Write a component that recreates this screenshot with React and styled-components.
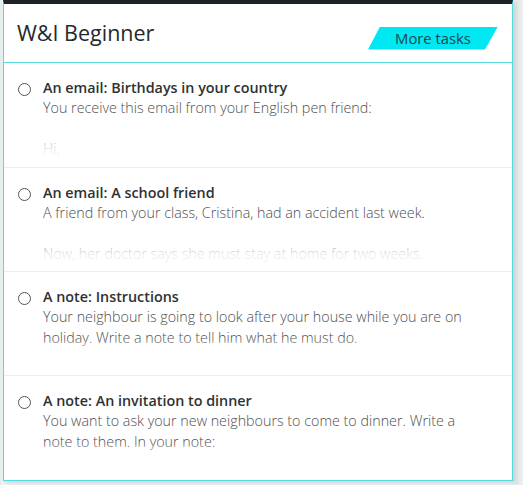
import React from 'react';
import styled, { createGlobalStyle } from 'styled-components';

const GlobalStyle = createGlobalStyle`
  html, body {
    margin: 0;
    padding: 0;
    background: #eef2f2;
    font-family: "Open Sans", "Liberation Sans", sans-serif;
  }
`;

const Page = styled.div`
  width: 523px;
  height: 485px;
  overflow: hidden;
  background: linear-gradient(90deg, #dfeeee 0, #f4f6f6 3px, #f4f6f6 510px, #e4e8e8 516px, #eef0f0 523px);
`;

const Card = styled.section`
  margin-left: 3px;
  width: 508px;
  height: 476px;
  background: #fff;
  border: 1px solid #55dadd;
  border-top: 4px solid #1d2226;
  box-shadow: 2px 2px 5px rgba(120, 140, 140, 0.35);
  display: flex;
  flex-direction: column;
`;

const Header = styled.header`
  height: 58px;
  flex-shrink: 0;
  display: flex;
  align-items: center;
  justify-content: space-between;
  padding: 0 14px 0 13px;
  border-bottom: 1px solid #55dadd;
`;

const Title = styled.h1`
  margin: 0 0 2px;
  font-size: 21.5px;
  font-weight: 400;
  color: #24292c;
`;

const MoreButton = styled.button`
  margin-top: 10px;
  width: 130px;
  height: 23px;
  border: 0;
  background: #00e9f2;
  clip-path: polygon(12px 0, 100% 0, 117px 100%, 0 100%);
  color: #174650;
  font-family: inherit;
  font-size: 14.8px;
  padding: 0;
  cursor: pointer;
`;

const List = styled.ul`
  list-style: none;
  margin: 0;
  padding: 0;
`;

const Item = styled.li`
  display: flex;
  gap: 12px;
  height: 104px;
  box-sizing: border-box;
  padding: 15px 29px 0 14px;
  border-top: ${({ first }) => (first ? '0' : '1px solid #eeeeee')};
`;

const Radio = styled.span`
  flex-shrink: 0;
  width: 11px;
  height: 11px;
  margin-top: 5px;
  border: 1px solid #555;
  border-radius: 50%;
  background: #fff;
`;

const Body = styled.div`
  flex: 1;
  min-width: 0;
`;

const ItemTitle = styled.div`
  font-size: 14.35px;
  font-weight: 600;
  line-height: 20px;
  color: #2e3234;
`;

const Excerpt = styled.div`
  position: relative;
  max-height: 62px;
  overflow: hidden;
  font-size: 14.3px;
  font-weight: 300;
  line-height: 20.5px;
  color: #4f4f4f;

  p {
    margin: 0 0 20px;
  }

  &::after {
    content: '';
    position: absolute;
    left: 0;
    right: 0;
    top: 34px;
    bottom: 0;
    background: linear-gradient(rgba(255, 255, 255, 0.2), rgba(255, 255, 255, 0.88) 18px);
  }
`;

const tasks = [
  {
    title: 'An email: Birthdays in your country',
    paras: ['You receive this email from your English pen friend:', 'Hi,'],
  },
  {
    title: 'An email: A school friend',
    paras: [
      'A friend from your class, Cristina, had an accident last week.',
      'Now, her doctor says she must stay at home for two weeks.',
    ],
  },
  {
    title: 'A note: Instructions',
    paras: [
      'Your neighbour is going to look after your house while you are on holiday. Write a note to tell him what he must do.',
    ],
  },
  {
    title: 'A note: An invitation to dinner',
    paras: [
      'You want to ask your new neighbours to come to dinner. Write a note to them. In your note:',
    ],
  },
];

const App = () => {
  return (
    <Page>
      <GlobalStyle />
      <Card>
        <Header>
          <Title>W&amp;I Beginner</Title>
          <MoreButton>More tasks</MoreButton>
        </Header>
        <List>
          {tasks.map((task, i) => (
            <Item key={task.title} first={i === 0}>
              <Radio />
              <Body>
                <ItemTitle>{task.title}</ItemTitle>
                <Excerpt>
                  {task.paras.map((p) => (
                    <p key={p}>{p}</p>
                  ))}
                </Excerpt>
              </Body>
            </Item>
          ))}
        </List>
      </Card>
    </Page>
  );
};

export default App;
